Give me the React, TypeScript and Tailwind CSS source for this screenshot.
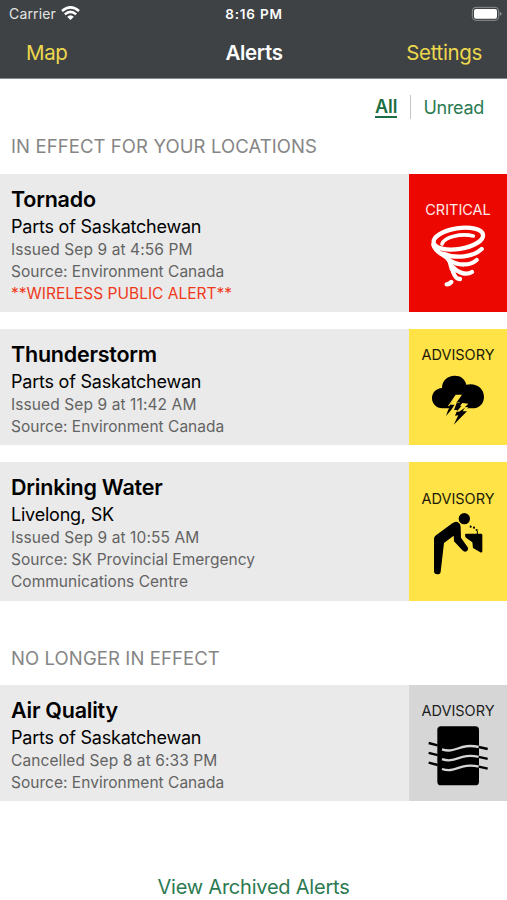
import type { ReactNode } from "react";

function WifiIcon() {
  return (
    <svg width="19" height="15" viewBox="0 0 57 45" fill="none" stroke="#fff" strokeWidth="7.500" className="ml-[5px] mt-[-1px]">
      <path d="M3 15 Q28.500 -7 54 15" />
      <path d="M11.500 25 Q28.500 10 45.500 25" />
      <path d="M28.500 42 L18.500 32 Q28.500 23 38.500 32 Z" fill="#fff" stroke="none" />
    </svg>
  );
}

function BatteryIcon() {
  return (
    <svg width="31" height="16" viewBox="0 0 93 48" fill="none" className="mt-[-1px]">
      <rect x="4" y="4" width="79" height="39" rx="11" stroke="#8b8e90" strokeWidth="3" />
      <rect x="9" y="9" width="69" height="29" rx="6" fill="#fff" />
      <path d="M86 17 Q92 19 92 23.500 Q92 28 86 30 Z" fill="#8b8e90" />
    </svg>
  );
}

function TornadoIcon() {
  return (
    <svg width="98" height="70" viewBox="12 155 294 210" fill="none" stroke="#fff" strokeWidth="13" strokeLinecap="round" className="mt-[2px]">
      <ellipse cx="160" cy="205" rx="75" ry="31" transform="rotate(-9 160 205)" />
      <path d="M111 221 C118 200 168 188 205 197" strokeWidth="11" />
      <path d="M85 223 C92 250 118 250 131 268 C140 281 134 290 145 303" />
      <path d="M115 250 C152 266 205 260 230 236" />
      <path d="M131 268 C160 288 196 286 215 269" />
      <path d="M140 288 C160 309 184 315 201 305" />
      <path d="M144 304 C149 319 157 327 165 326" />
      <path d="M125 342 Q134 341 139 335" />
    </svg>
  );
}

function ThunderstormIcon() {
  return (
    <svg width="98" height="60" viewBox="12 130 294 180" className="mt-[4px]">
      <path
        d="M112 248 C94 247 81 235 81 217 C81 201 94 188 111 187 C111 165 127 150 149 150 C168 150 180 160 184 177 C213 170 237 188 237 213 C237 235 222 248 201 248 Z"
        fill="#000"
      />
      <path d="M152 207 L129 241 L140 242 L128 258 L146 254 L165 230 L154 231 L171 207 Z" fill="#ffe347" />
      <path d="M146 219 L136 237 L149 237 L139 252 L123 271 L129 254 L136 242 L133 241 Z" fill="#000" />
      <path d="M172 232 L149 259 L160 260 L157 270 L178 257 L190 244 L179 245 L190 234 Z" fill="#ffe347" />
      <path d="M155 232 L147 253 L157 253 L150 270 L160 269 L146 297 L186 257 L173 257 L180 246 L162 258 L155 258 L170 240 L160 241 L167 232 Z" fill="#000" />
    </svg>
  );
}

function DrinkingWaterIcon() {
  return (
    <svg width="98" height="70" viewBox="12 150 294 210" className="mt-[-0.5px]">
      <circle cx="178" cy="182" r="17" fill="#000" />
      <path
        d="M87 244 Q86 237 93 232 L142 196 Q152 188 161 194 Q167 198 167 208 L168 239 L187 266 Q192 273 186 279 Q179 284 172 277 L147 250 L146 233 L117 255 L107 341 Q106 349 97 349 Q87 349 87 340 Z"
        fill="#000"
      />
      <path d="M180 230 Q180 227 184 227 L228 227 Q232 227 232 231 L232 279 Q232 285 226 283 L204 270 L202 253 L184 240 Q180 237 180 230 Z" fill="#000" />
      <path d="M217 228 V219" stroke="#000" strokeWidth="3" />
      <g fill="#000">
        <circle cx="197" cy="206" r="3.200" />
        <circle cx="207" cy="209" r="3.200" />
        <circle cx="215" cy="216" r="3.200" />
      </g>
    </svg>
  );
}

function AirQualityIcon() {
  return (
    <svg width="98" height="66" viewBox="12 128 294 198" fill="none" strokeWidth="7" className="mt-[2px]">
      <rect x="97" y="138" width="125" height="177" rx="11" fill="#000" />
      {[0, 29.5, 59].map((dy) => (
        <g key={dy} transform={`translate(0 ${dy})`}>
          <path d="M71 188 L98 195" stroke="#000" />
          <path d="M111 207 C153 221 163 187 222 200" stroke="#d6d6d6" />
          <path d="M221 200 L248 206" stroke="#000" />
        </g>
      ))}
    </svg>
  );
}

interface AlertCardProps {
  title: string;
  location: string;
  details: { text: string; style: string }[];
  level: string;
  height: string;
  panel: string;
  icon: ReactNode;
}

function AlertCard({ title, location, details, level, height, panel, icon }: AlertCardProps) {
  return (
    <article className={`flex bg-[#eaeaea] ${height}`}>
      <div className="flex-1 pl-[11px] pt-[12px] whitespace-nowrap">
        <h3 className="h-[28px] text-[21.5px] leading-[27px] font-semibold tracking-[-0.23px] text-black">{title}</h3>
        <p className="h-[25px] text-[18px] leading-[26px] tracking-[-0.22px] text-black">{location}</p>
        {details.map((d) => (
          <p key={d.text} className={`h-[21.8px] text-[15.5px] leading-[21.8px] ${d.style}`}>
            {d.text}
          </p>
        ))}
      </div>
      <div className={`flex w-[98px] flex-col items-center ${panel}`}>
        <span className="h-[20px] text-[14.5px] leading-[20px]">{level}</span>
        {icon}
      </div>
    </article>
  );
}

const issued = "text-[#636363] tracking-[0.1px]";
const source = "text-[#636363] tracking-[0.02px]";

export default function App() {
  return (
    <main className="flex h-[900px] w-[507px] flex-col overflow-hidden bg-white font-['Inter','Liberation_Sans',sans-serif]">
      <header className="h-[79px] border-b border-[#85888a] bg-[#3e4245] text-white">
        <div className="grid h-[28px] grid-cols-3 items-center pl-[9px] pr-[5px]">
          <div className="flex items-center text-[14px] leading-[18px] tracking-[0.15px] text-[#e3e4e4]">
            Carrier
            <WifiIcon />
          </div>
          <span className="pr-[3px] text-center text-[13.5px] font-semibold tracking-[0.8px]">8:16 PM</span>
          <div className="flex justify-end">
            <BatteryIcon />
          </div>
        </div>
        <nav className="grid h-[50px] grid-cols-3 items-center pl-[26px] pr-[25px] text-[20.5px] tracking-[-0.35px]">
          <a className="text-[#ecd84d]">Map</a>
          <h1 className="text-center font-semibold">Alerts</h1>
          <a className="text-right text-[#ecd84d]">Settings</a>
        </nav>
      </header>

      <div className="flex h-[56px] items-center justify-end pr-[23px] text-[18px] tracking-[-0.3px] text-[#2b7a52]">
        <a className="border-b-2 border-[#1b6e43] leading-[19px] font-semibold tracking-normal text-[#1b6e43]">All</a>
        <span className="mr-[12px] ml-[13px] h-[24px] w-px bg-[#c4c4c4]" />
        <a>Unread</a>
      </div>

      <h2 className="h-[39px] pl-[11px] text-[18.5px] leading-[22px] tracking-[0.1px] text-[#858585]">IN EFFECT FOR YOUR LOCATIONS</h2>
      <section className="flex flex-col gap-[17px]">
        <AlertCard
          title="Tornado"
          location="Parts of Saskatchewan"
          details={[
            { text: "Issued Sep 9 at 4:56 PM", style: issued },
            { text: "Source: Environment Canada", style: source },
            { text: "**WIRELESS PUBLIC ALERT**", style: "text-[#f0391b]" },
          ]}
          level="CRITICAL"
          height="h-[138px]"
          panel="bg-[#ec0700] pt-[26px] text-[#ffe9e7]"
          icon={<TornadoIcon />}
        />
        <AlertCard
          title="Thunderstorm"
          location="Parts of Saskatchewan"
          details={[
            { text: "Issued Sep 9 at 11:42 AM", style: issued },
            { text: "Source: Environment Canada", style: source },
          ]}
          level="ADVISORY"
          height="h-[116px]"
          panel="bg-[#ffe347] pt-[15.5px] text-[#1d1a08]"
          icon={<ThunderstormIcon />}
        />
        <AlertCard
          title="Drinking Water"
          location="Livelong, SK"
          details={[
            { text: "Issued Sep 9 at 10:55 AM", style: issued },
            { text: "Source: SK Provincial Emergency", style: source },
            { text: "Communications Centre", style: source },
          ]}
          level="ADVISORY"
          height="h-[139px]"
          panel="bg-[#ffe347] pt-[26.5px] text-[#1d1a08]"
          icon={<DrinkingWaterIcon />}
        />
      </section>

      <h2 className="mt-[46px] h-[38px] pl-[11px] text-[18.5px] leading-[22px] tracking-[0.1px] text-[#858585]">NO LONGER IN EFFECT</h2>
      <AlertCard
        title="Air Quality"
        location="Parts of Saskatchewan"
        details={[
          { text: "Cancelled Sep 8 at 6:33 PM", style: issued },
          { text: "Source: Environment Canada", style: source },
        ]}
        level="ADVISORY"
        height="h-[116px]"
        panel="bg-[#d6d6d6] pt-[15.5px] text-[#1d1d1d]"
        icon={<AirQualityIcon />}
      />

      <a className="mt-[73px] text-center text-[20px] leading-[26px] tracking-[-0.22px] text-[#2b7a52]">View Archived Alerts</a>
    </main>
  );
}
